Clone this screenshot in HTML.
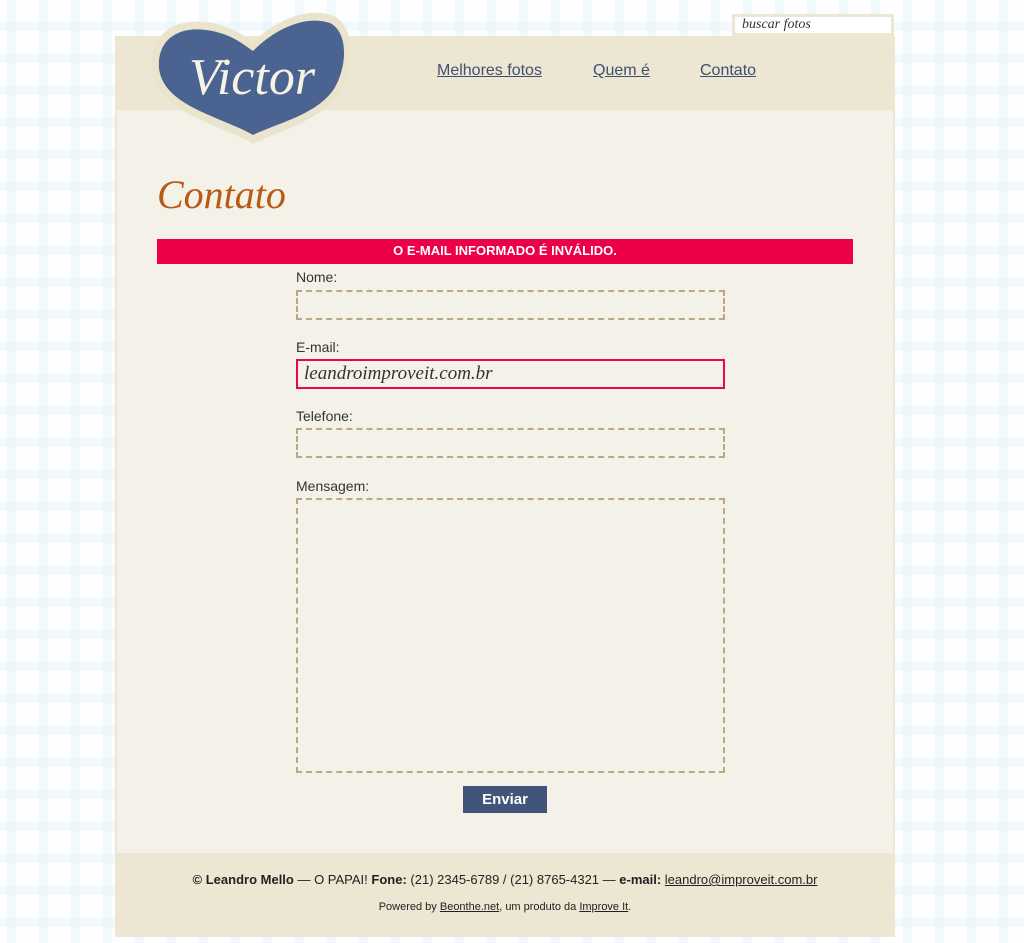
<!DOCTYPE html>
<html><head><meta charset="utf-8"><style>
*{margin:0;padding:0;box-sizing:border-box}
body{width:1024px;height:943px;position:relative;overflow:hidden;font-family:"Liberation Sans",sans-serif;
background-color:#fdfeff;
background-image:linear-gradient(90deg,transparent 7px,rgba(215,238,244,.3) 7px,rgba(215,238,244,.3) 16px,transparent 16px),linear-gradient(180deg,transparent 22px,rgba(215,238,244,.3) 22px,rgba(215,238,244,.3) 31px,transparent 31px);
background-size:32px 32px,32px 32px}
.a{position:absolute}
.lbl{position:absolute;left:296px;font-size:14px;color:#333}
.box{position:absolute;left:296px;width:429px;border:2px dashed #bba883}
nav a{position:absolute;top:62px;font-size:16px;color:#3f5070;text-decoration:underline}
.ft{font-size:13px;color:#222;text-align:center;position:absolute;left:115px;width:780px}
.ft a{color:#222;text-decoration:underline}
</style></head><body>
<div class="a" style="left:115px;top:36px;width:780px;height:901px;background:#ece6d2"></div>
<div class="a" style="left:117px;top:110px;width:776px;height:743px;background:#f4f1e8"></div>
<div class="a" style="left:732px;top:14px;width:162px;height:22px;background:#fff;border:3px solid #ece6d2;font-family:'Liberation Serif',serif;font-style:italic;font-size:14px;color:#333;padding-left:7px;line-height:16px">buscar fotos</div>
<svg class="a" style="left:148px;top:8px" width="210" height="140" viewBox="0 0 210 140">
<path d="M105 136 C70 115 8 105 4 60 C1 28 25 10 58 14 C82 17 96 28 105 34 C128 12 160 -2 186 8 C208 20 207 58 192 84 C172 114 132 122 105 136Z" fill="#ebe4cd"/>
<path d="M105 127 C72 108 15 98 11 60 C9 32 30 18 58 22 C82 25 95 36 105 43 C128 20 158 7 182 15 C200 24 200 57 186 81 C168 107 132 114 105 127Z" fill="#4b6390"/>
<text x="104" y="86" text-anchor="middle" font-family="'Liberation Serif',serif" font-style="italic" font-size="52" fill="#f6f2e4">Victor</text>
</svg>
<nav><a style="left:437px">Melhores fotos</a><a style="left:593px">Quem é</a><a style="left:700px">Contato</a></nav>
<div class="a" style="left:157px;top:171px;font-family:'Liberation Serif',serif;font-style:italic;font-size:40px;color:#b85a14">Contato</div>
<div class="a" style="left:157px;top:239px;width:696px;height:25px;background:#ee0049;color:#fff;font-weight:bold;font-size:13px;text-align:center;line-height:24px">O E-MAIL INFORMADO É INVÁLIDO.</div>
<div class="lbl" style="top:269px">Nome:</div>
<div class="box" style="top:290px;height:30px"></div>
<div class="lbl" style="top:339px">E-mail:</div>
<div class="a" style="left:296px;top:359px;width:429px;height:30px;border:2px solid #e8084c;font-family:'Liberation Serif',serif;font-style:italic;font-size:19px;color:#333;padding-left:6px;line-height:26px">leandroimproveit.com.br</div>
<div class="lbl" style="top:408px">Telefone:</div>
<div class="box" style="top:428px;height:30px"></div>
<div class="lbl" style="top:478px">Mensagem:</div>
<div class="box" style="top:498px;height:275px"></div>
<div class="a" style="left:463px;top:786px;width:84px;height:27px;background:#41557a;color:#fff;font-weight:bold;font-size:15px;text-align:center;line-height:27px">Enviar</div>
<div class="ft" style="top:872px"><b>© Leandro Mello</b> — O PAPAI! <b>Fone:</b> (21) 2345-6789 / (21) 8765-4321 — <b>e-mail:</b> <a>leandro@improveit.com.br</a></div>
<div class="ft" style="top:901px;font-size:11px">Powered by <a>Beonthe.net</a>, um produto da <a>Improve It</a>.</div>
</body></html>
